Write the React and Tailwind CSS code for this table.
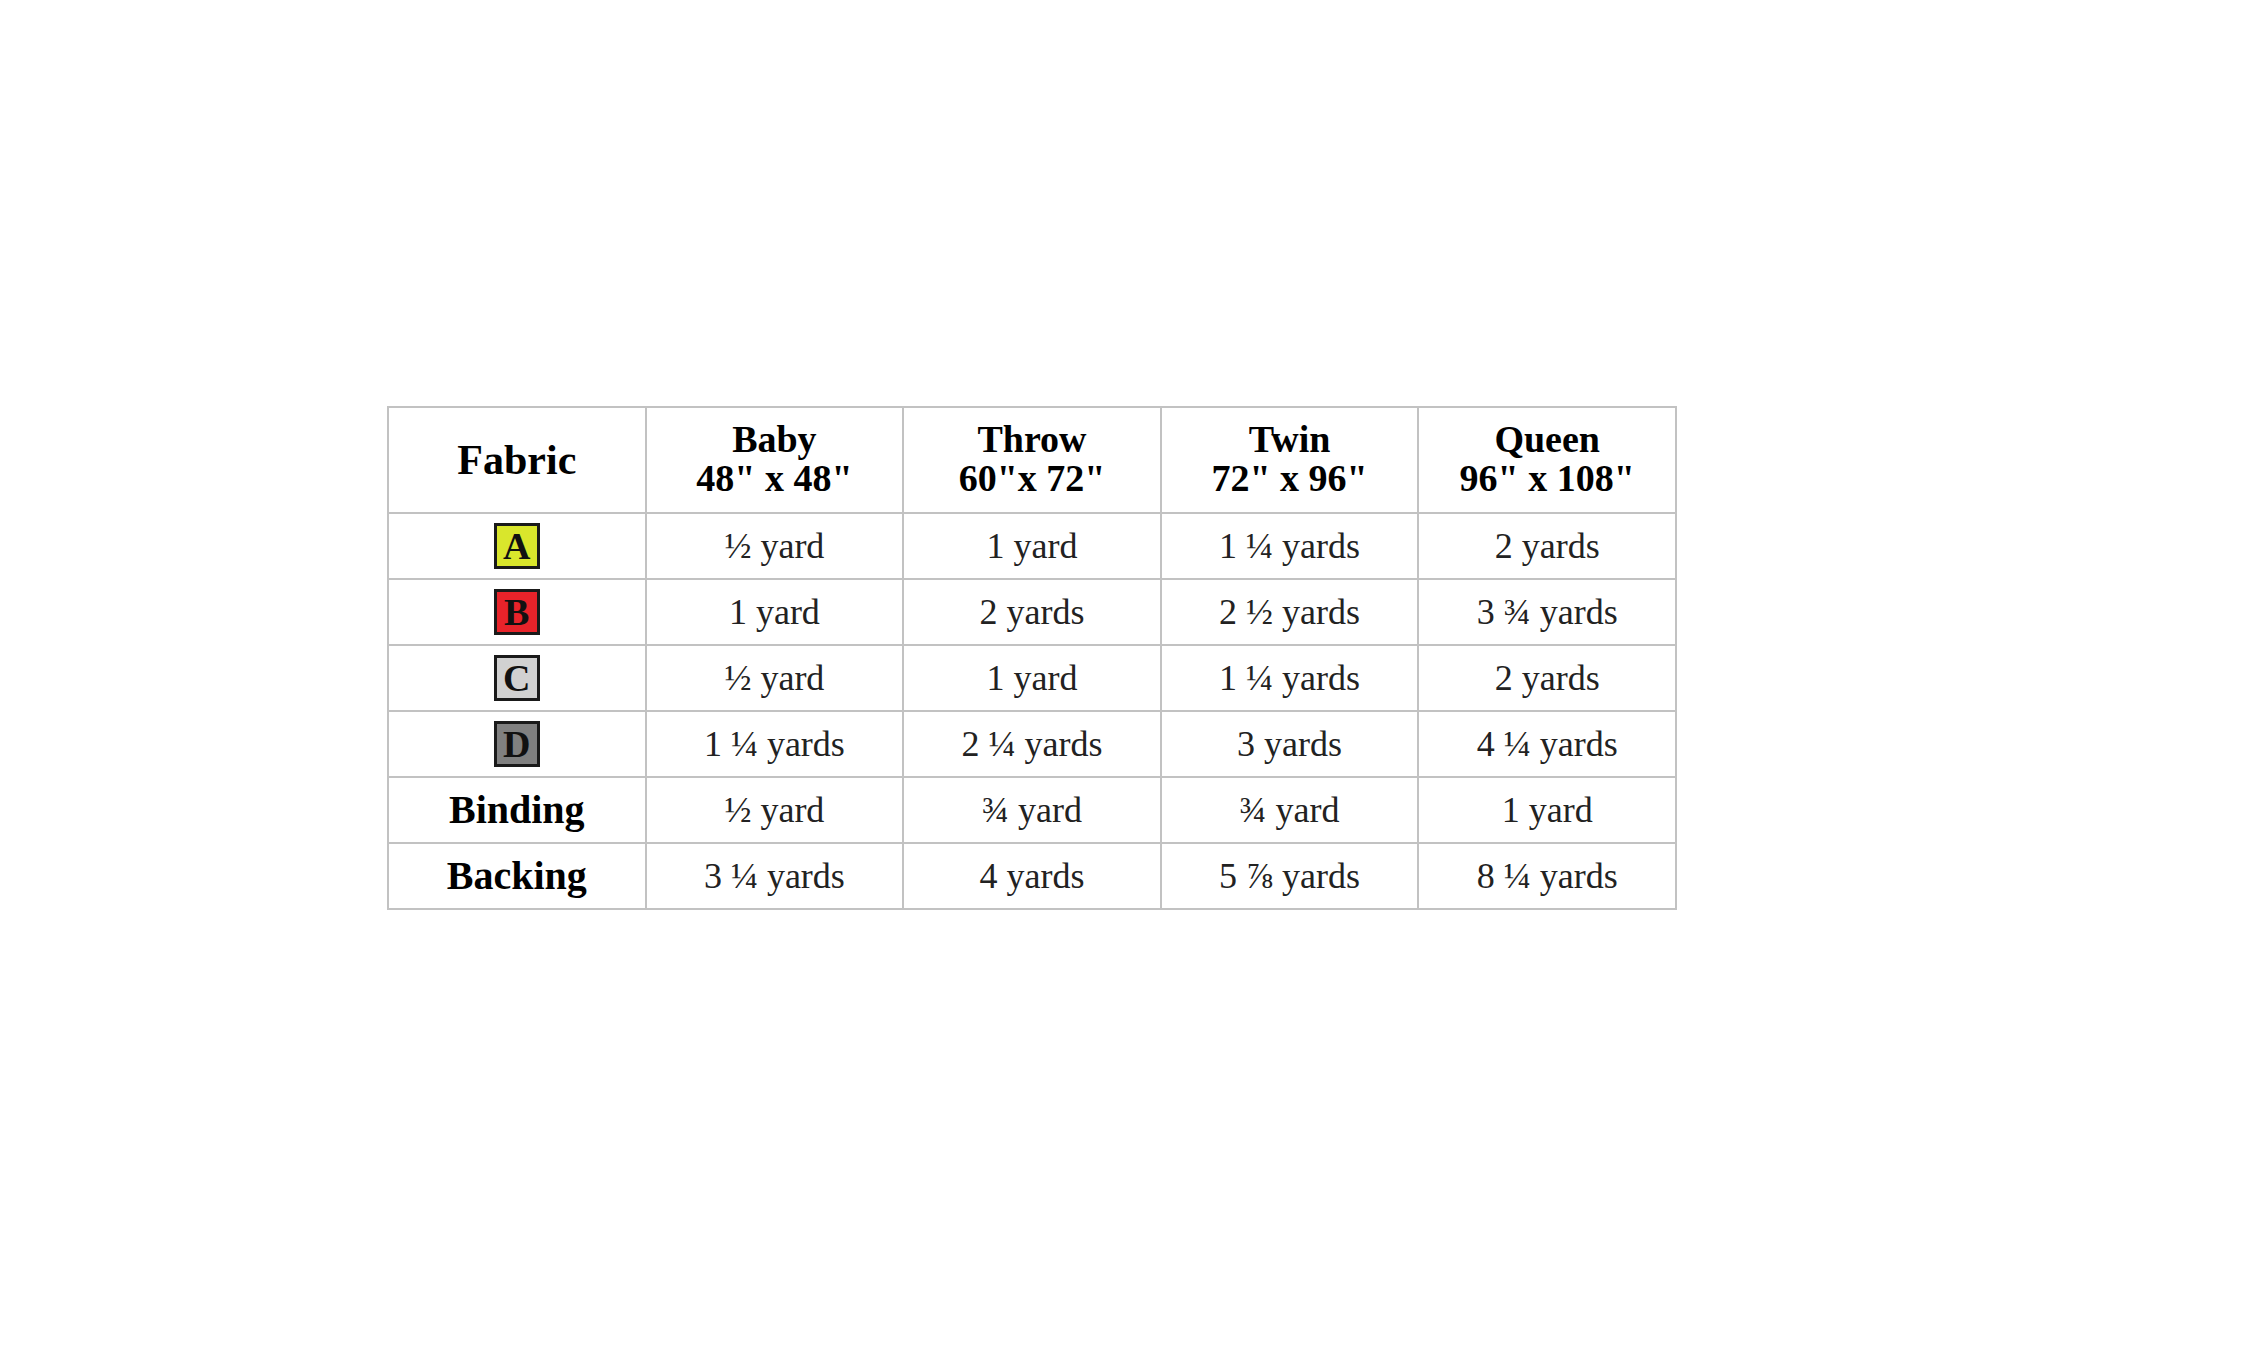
const sizes = [
  { name: 'Baby', dims: '48" x 48"' },
  { name: 'Throw', dims: '60"x 72"' },
  { name: 'Twin', dims: '72" x 96"' },
  { name: 'Queen', dims: '96" x 108"' },
]

const rows = [
  { swatch: 'A', color: 'bg-[#d9e62c]', values: ['½ yard', '1 yard', '1 ¼ yards', '2 yards'] },
  { swatch: 'B', color: 'bg-[#e8232a]', values: ['1 yard', '2 yards', '2 ½ yards', '3 ¾ yards'] },
  { swatch: 'C', color: 'bg-[#d1d1d1]', values: ['½ yard', '1 yard', '1 ¼ yards', '2 yards'] },
  { swatch: 'D', color: 'bg-[#808080]', values: ['1 ¼ yards', '2 ¼ yards', '3 yards', '4 ¼ yards'] },
  { label: 'Binding', values: ['½ yard', '¾ yard', '¾ yard', '1 yard'] },
  { label: 'Backing', values: ['3 ¼ yards', '4 yards', '5 ⅞ yards', '8 ¼ yards'] },
]

export default function App() {
  return (
    <div className="min-h-screen bg-white pl-[387px] pt-[406px] font-['Liberation_Serif',serif]">
      <div className="grid w-[1290px] grid-cols-5 border-l-2 border-t-2 border-[#c2c2c2]">
        {/* header */}
        <div className="flex h-[106px] items-center justify-center border-b-2 border-r-2 border-[#c2c2c2] text-[42px] font-bold text-black">
          Fabric
        </div>
        {sizes.map((s) => (
          <div
            key={s.name}
            className="flex h-[106px] flex-col items-center justify-center border-b-2 border-r-2 border-[#c2c2c2] pb-[2px] text-[38px] font-bold leading-[39px] text-black"
          >
            <span>{s.name}</span>
            <span className="whitespace-pre">{s.dims}</span>
          </div>
        ))}

        {/* body */}
        {rows.map((r, i) => (
          <div key={i} className="contents">
            <div className="flex h-[66px] items-center justify-center border-b-2 border-r-2 border-[#c2c2c2]">
              {r.swatch ? (
                <span
                  className={`flex h-[46px] w-[46px] items-center justify-center border-[3px] border-[#1a1a1a] ${r.color} text-[38px] font-bold leading-none text-[#111]`}
                >
                  {r.swatch}
                </span>
              ) : (
                <span className="text-[40px] font-bold text-black">{r.label}</span>
              )}
            </div>
            {r.values.map((v, j) => (
              <div
                key={j}
                className="flex h-[66px] items-center justify-center whitespace-pre border-b-2 border-r-2 border-[#c2c2c2] text-[36px] text-[#222]"
              >
                {v}
              </div>
            ))}
          </div>
        ))}
      </div>
    </div>
  )
}
